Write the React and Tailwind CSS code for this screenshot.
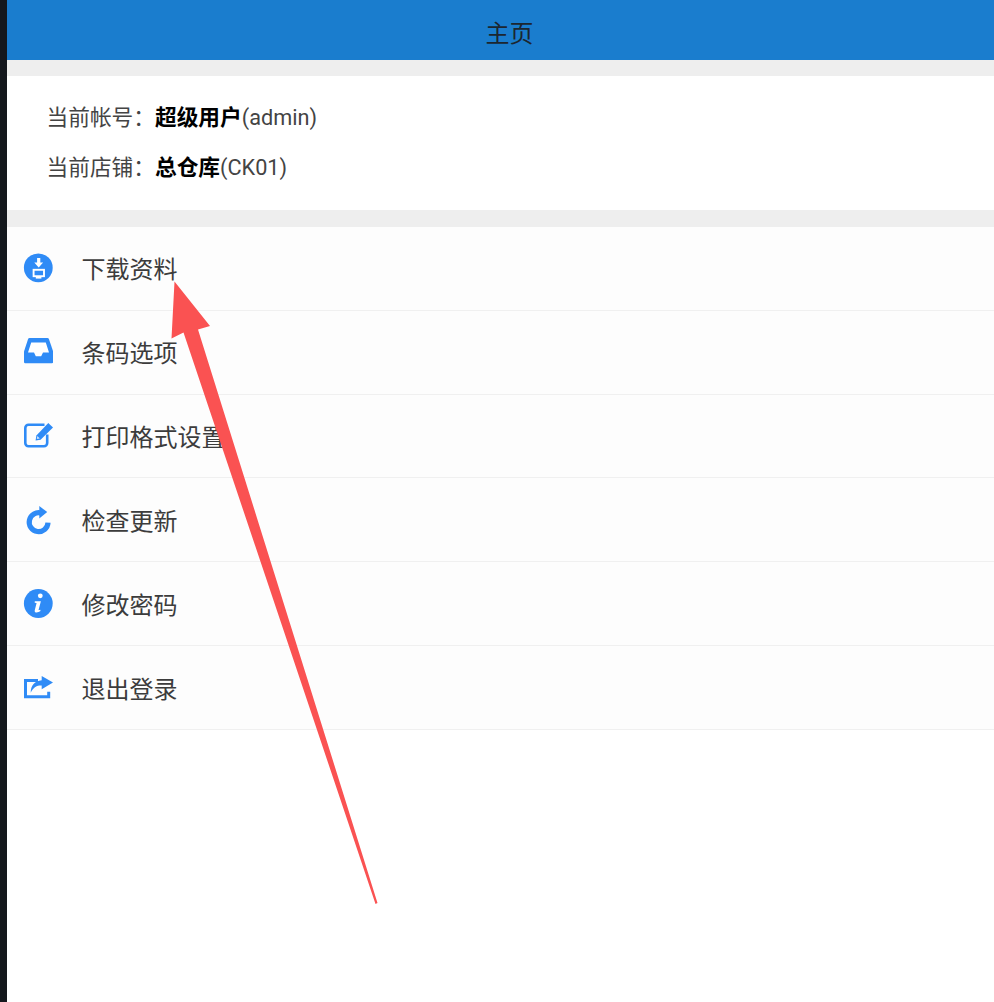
const BLUE = "#2f8bf6";

const Download = () => (
  <svg width="30" height="30" viewBox="23 253 30 30">
    <circle cx="38.300" cy="267.800" r="14.400" fill={BLUE} />
    <path d="M37.100 258h3.200v4.600h2.800l-4.400 5-4.400-5h2.800z" fill="#fff" />
    <rect x="33.600" y="269.800" width="10.400" height="6.400" fill="none" stroke="#fff" strokeWidth="1.900" />
    <path d="M35.800 277.800h5.600" stroke="#fff" strokeWidth="1.600" />
  </svg>
);

const Inbox = () => (
  <svg width="30" height="30" viewBox="23 337 30 30">
    <path d="M29.500 338h18a1.500 1.500 0 0 1 1.400 1l4.300 12.500V362a1.200 1.200 0 0 1-1.200 1.200H25.200A1.200 1.200 0 0 1 24 362v-10.500L28.100 339a1.500 1.500 0 0 1 1.400-1z" fill={BLUE} />
    <path d="M31.200 342.500h14.600L49 352.500h-6l-1.800 3.800h-5.400l-1.800-3.800h-6z" fill="#fff" />
  </svg>
);

const Edit = () => (
  <svg width="30" height="30" viewBox="23 421 30 30">
    <path d="M44.500 424.800H28.500a3.200 3.200 0 0 0-3.200 3.200v15a3.200 3.200 0 0 0 3.200 3.200h15.500a3.200 3.200 0 0 0 3.200-3.200v-8.500" fill="none" stroke={BLUE} strokeWidth="2.600" />
    <path d="M48.300 423l4.700 4.400-12.400 12.300-5 .9.800-5.200z" fill={BLUE} />
    <path d="M37.300 436l2.500 2.400-3 .6z" fill="#cfe3fb" />
  </svg>
);

const Redo = () => (
  <svg width="30" height="30" viewBox="23 505 30 30">
    <path d="M48 522.600a9.400 9.400 0 1 1-6.500-9.400" fill="none" stroke={BLUE} strokeWidth="5.200" />
    <path d="M39.300 506l7.900 6.100-7.900 6.400z" fill={BLUE} />
  </svg>
);

const Info = () => (
  <svg width="30" height="30" viewBox="23 588 30 30">
    <circle cx="38.300" cy="602.500" r="14.400" fill={BLUE} />
    <circle cx="40.300" cy="594.800" r="2.400" fill="#fff" />
    <path d="M34.800 600.300h6.100l-2.300 8.400c-.1.500.3.700 1.700 0l.2 1.300c-2 1.400-6.200 2.500-5.800-.6l1.900-7.300-1.900-.3z" fill="#fff" />
  </svg>
);

const Share = () => (
  <svg width="30" height="30" viewBox="23 672 30 30">
    <path d="M38 679.500H25.500v16.200h23.200v-5" fill="none" stroke={BLUE} strokeWidth="3" />
    <path d="M41.700 675l11.300 6.400-11.300 6.800v-3.700c-4.500-.2-8 1.200-11 7.300 0-7.500 4-11.800 11-12.600z" fill={BLUE} />
  </svg>
);

const rows = [
  [Download, "下载资料"],
  [Inbox, "条码选项"],
  [Edit, "打印格式设置"],
  [Redo, "检查更新"],
  [Info, "修改密码"],
  [Share, "退出登录"],
];

export default function App() {
  return (
    <div className="relative flex h-[1002px] w-[994px] overflow-hidden bg-white font-['Roboto','Noto_Sans_CJK_SC',sans-serif]">
      <div className="w-[7px] shrink-0 bg-[#14181d]" />
      <main className="flex min-w-0 flex-1 flex-col">
        <header className="flex h-[60px] items-center justify-center bg-[#1a7dce] pt-[7px] pl-[18px] text-[24px] text-[#1c2630]">
          主页
        </header>
        <div className="h-[16px] bg-[#eeeeee]" />
        <section className="flex h-[134px] flex-col justify-center gap-[16px] bg-white pl-[39.500px] text-[21.700px] leading-[34px] text-[#444444]">
          <div>
            当前帐号：<b className="font-bold text-black">超级用户</b>(admin)
          </div>
          <div>
            当前店铺：<b className="font-bold text-black">总仓库</b>(CK01)
          </div>
        </section>
        <div className="h-[17px] bg-[#eeeeee]" />
        <ul className="bg-[#fdfdfd]">
          {rows.map(([Icon, label]) => (
            <li
              key={label}
              className="flex h-[83.830px] items-center gap-[28.500px] border-b border-[#f0f0f0] pl-[16px] text-[24px] text-[#3c3c3c]"
            >
              <Icon />
              <span className="pt-[4px]">{label}</span>
            </li>
          ))}
        </ul>
      </main>
      <svg className="pointer-events-none absolute top-0 left-0" width="994" height="1002" viewBox="0 0 994 1002">
        <path d="M174.500 281.500L210 326L198 329.500L377.500 903L375.500 904L183.500 332.500L171.500 338.500z" fill="#fa5252" />
      </svg>
    </div>
  );
}
